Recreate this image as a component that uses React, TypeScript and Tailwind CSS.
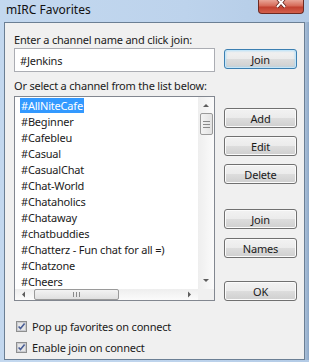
import { useState } from 'react';

const channels = [
  '#AllNiteCafe',
  '#Beginner',
  '#Cafebleu',
  '#Casual',
  '#CasualChat',
  '#Chat-World',
  '#Chataholics',
  '#Chataway',
  '#chatbuddies',
  '#Chatterz - Fun chat for all =)',
  '#Chatzone',
  '#Cheers',
];

function WinButton({ label, primary, className }: { label: string; primary?: boolean; className?: string }) {
  return (
    <button
      className={`w-[73px] h-[20px] rounded-[3px] border text-[11px] leading-none text-[#1b1b1b] flex items-center justify-center bg-[linear-gradient(#f2f2f2_0%,#ebebeb_50%,#dddddd_51%,#cfcfcf_100%)] ${
        primary ? 'border-[#3c7fb1] shadow-[inset_0_0_0_1px_#c6e6f8,inset_0_0_2px_1px_#9fd4f2]' : 'border-[#707070] shadow-[inset_0_0_0_1px_#fbfbfb]'
      } ${className ?? ''}`}
    >
      {label}
    </button>
  );
}

function CheckBox({ label }: { label: string }) {
  return (
    <label className="flex items-center h-[11px] gap-[5px] cursor-pointer">
      <svg width="11" height="11" viewBox="0 0 11 11">
        <rect x="0.5" y="0.5" width="10" height="10" fill="#f4f4f4" stroke="#8e8f8f" />
        <rect x="1.5" y="1.5" width="8" height="8" fill="#e6e6e6" stroke="#c9cbd0" />
        <path d="M2.6 5.4 L4.5 7.6 L8.6 2.4" fill="none" stroke="#4a5f97" strokeWidth="1.6" />
      </svg>
      <span className="text-[11px] leading-[15px] text-[#1b1b1b]">{label}</span>
    </label>
  );
}

export default function App() {
  const [selected, setSelected] = useState(0);
  const [name, setName] = useState('#Jenkins');

  return (
    <div
      className="w-[309px] h-[362px] overflow-hidden flex flex-col tracking-[-0.2px] bg-[linear-gradient(90deg,#c3d8ef_0%,#bdd3ec_60%,#b3cbe6_100%)]"
      style={{ fontFamily: '"Noto Sans", "Open Sans", sans-serif' }}
    >
      {/* title bar */}
      <div className="h-[22px] shrink-0 flex items-start justify-between">
        <span className="ml-[6px] mt-[1px] text-[12px] leading-[17px] tracking-normal text-[#111]">mIRC Favorites</span>
        <div className="mr-[5px] w-[46px] h-[14px] rounded-b-[4px] border border-t-0 border-[#6d2a22] bg-[linear-gradient(#e9a597_0%,#d66a58_45%,#c24130_55%,#d3604c_100%)] flex items-start justify-center overflow-hidden">
          <svg width="12" height="10" viewBox="0 0 12 10" className="-mt-[1px]">
            <path d="M2 -1 L10 8 M10 -1 L2 8" stroke="#5a1a12" strokeWidth="3.4" />
            <path d="M2 -1 L10 8 M10 -1 L2 8" stroke="#ffffff" strokeWidth="2" />
          </svg>
        </div>
      </div>

      <div className="flex flex-1">
        <div className="w-[4px] shrink-0" />
        {/* dialog body */}
        <div className="w-[301px] h-[338px] border border-[#6b7f94] bg-[#f0f0f0] pl-[9px] pt-[9px] flex flex-col">
          <div className="text-[11px] leading-[15px] text-[#1b1b1b]">Enter a channel name and click join:</div>
          <div className="flex items-start mt-[1px]">
            <input
              value={name}
              onChange={(e) => setName(e.target.value)}
              className="w-[201px] h-[24px] border border-[#abadb3] bg-white px-[5px] text-[11px] text-[#1b1b1b] outline-none"
            />
            <WinButton label="Join" primary className="ml-[9px] mt-[1px]" />
          </div>

          <div className="mt-[6px] text-[11px] leading-[15px] text-[#1b1b1b]">Or select a channel from the list below:</div>

          <div className="flex items-start mt-[3px]">
            {/* list box */}
            <div className="w-[201px] h-[205px] border border-[#828790] bg-white flex flex-col">
              <div className="flex">
                <div className="flex-1 h-[192px] overflow-hidden pl-[5px]">
                  {channels.map((c, i) => (
                    <div key={c} className="h-[16px] flex items-center" onClick={() => setSelected(i)}>
                      <span
                        className={`px-[1px] h-[15px] text-[11px] leading-[15px] whitespace-nowrap ${
                          selected === i ? 'bg-[#3399ff] text-white' : 'text-[#1b1b1b]'
                        }`}
                      >
                        {c}
                      </span>
                    </div>
                  ))}
                </div>
                {/* vertical scrollbar */}
                <div className="w-[16px] h-[192px] bg-[linear-gradient(90deg,#eeeeee,#fbfbfb)] flex flex-col items-center">
                  <svg width="16" height="16" viewBox="0 0 16 16">
                    <path d="M5 10 L8 7 L11 10 Z" fill="#5d5d5d" />
                  </svg>
                  <div className="w-[13px] h-[22px] rounded-[2px] border border-[#9a9a9a] bg-[linear-gradient(90deg,#f3f3f3,#e2e2e2)] flex flex-col items-center justify-center gap-[2px]">
                    <div className="w-[7px] h-[1px] bg-[#8a8a8a]" />
                    <div className="w-[7px] h-[1px] bg-[#8a8a8a]" />
                    <div className="w-[7px] h-[1px] bg-[#8a8a8a]" />
                  </div>
                  <div className="flex-1" />
                  <svg width="16" height="16" viewBox="0 0 16 16">
                    <path d="M5 6 L8 9 L11 6 Z" fill="#5d5d5d" />
                  </svg>
                </div>
              </div>
              {/* horizontal scrollbar */}
              <div className="flex h-[11px]">
                <div className="flex-1 bg-[linear-gradient(#eeeeee,#fbfbfb)] flex items-center">
                  <svg width="17" height="11" viewBox="0 0 17 11">
                    <path d="M10 2.5 L7 5.5 L10 8.5 Z" fill="#5d5d5d" />
                  </svg>
                  <div className="ml-[2px] w-[85px] h-[11px] rounded-[2px] border border-[#9a9a9a] bg-[linear-gradient(#f3f3f3,#e0e0e0)] flex items-center justify-center gap-[2px]">
                    <div className="w-[1px] h-[5px] bg-[#8a8a8a]" />
                    <div className="w-[1px] h-[5px] bg-[#8a8a8a]" />
                    <div className="w-[1px] h-[5px] bg-[#8a8a8a]" />
                  </div>
                  <div className="flex-1" />
                  <svg width="17" height="11" viewBox="0 0 17 11">
                    <path d="M7 2.5 L10 5.5 L7 8.5 Z" fill="#5d5d5d" />
                  </svg>
                </div>
                <div className="w-[16px] bg-[#f0f0f0]" />
              </div>
            </div>

            {/* button column */}
            <div className="ml-[9px] flex flex-col">
              <WinButton label="Add" className="mt-[12px]" />
              <WinButton label="Edit" className="mt-[8px]" />
              <WinButton label="Delete" className="mt-[8px]" />
              <WinButton label="Join" className="mt-[25px]" />
              <WinButton label="Names" className="mt-[9px]" />
              <WinButton label="OK" className="mt-[23px]" />
            </div>
          </div>

          <div className="mt-[20px] ml-[2px] flex flex-col gap-[10px]">
            <CheckBox label="Pop up favorites on connect" />
            <CheckBox label="Enable join on connect" />
          </div>
        </div>
        <div className="flex-1 bg-[linear-gradient(90deg,#a9bfd8,#8ea9c8)]" />
      </div>
      <div className="h-[2px] shrink-0" />
    </div>
  );
}
